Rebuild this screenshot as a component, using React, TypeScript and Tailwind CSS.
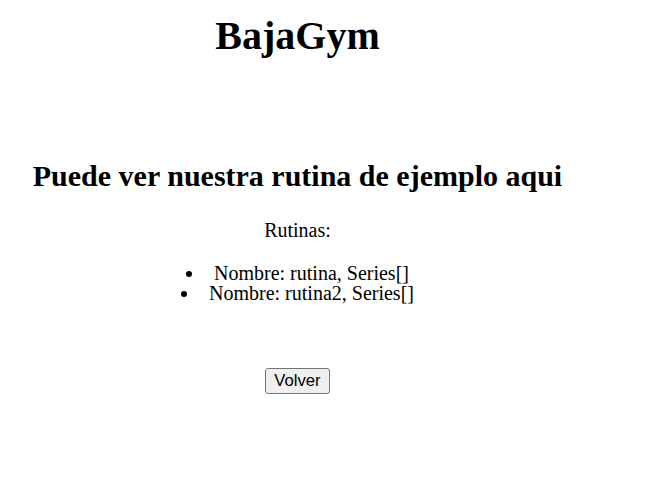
export default function App() {
  const rutinas = ["rutina", "rutina2"];
  return (
    <div className="min-h-[482px] w-full bg-white text-black">
      <div className="flex w-[595px] flex-col items-center text-center font-['Liberation_Serif','Times_New_Roman',serif]">
        <h1 className="mt-[13px] text-[40px] font-bold leading-[46px]">BajaGym</h1>
        <h2 className="mt-[100px] text-[30px] font-bold leading-[34px]">
          Puede ver nuestra rutina de ejemplo aqui
        </h2>
        <p className="mt-[26px] text-[20px] leading-[23px]">Rutinas:</p>
        <ul className="mt-[21px] flex flex-col items-center text-[20px] leading-[20px]">
          {rutinas.map((r) => (
            <li key={r} className="whitespace-nowrap">
              <span className="mb-[3px] mr-[22px] inline-block h-[6px] w-[6px] rounded-full bg-black align-baseline" />
              Nombre: {r}, Series[]
            </li>
          ))}
        </ul>
        <button
          type="button"
          className="mt-[65px] rounded-[3px] border border-[#767676] bg-[#efefef] px-[8px] py-[2px] font-['Liberation_Sans',Arial,sans-serif] text-[16.67px] leading-[20px] text-black"
        >
          Volver
        </button>
      </div>
    </div>
  );
}
